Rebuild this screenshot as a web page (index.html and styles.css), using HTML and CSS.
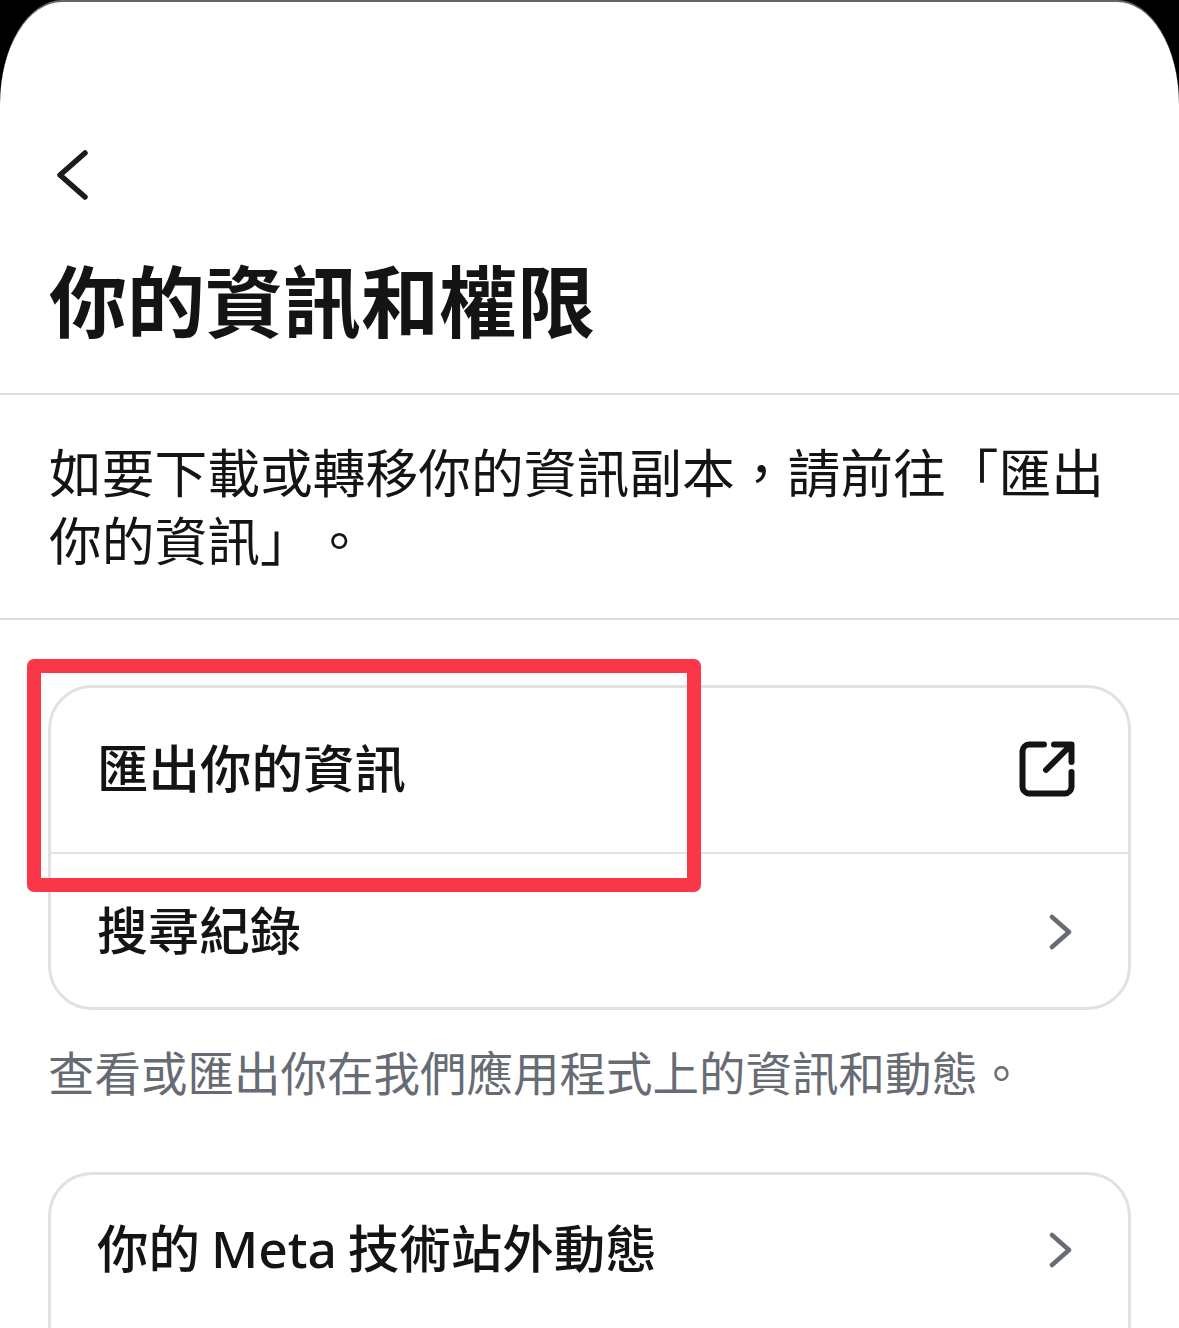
FILE: index.html
```html
<!DOCTYPE html>
<html lang="zh-Hant">
<head>
    <meta charset="UTF-8">
    <meta name="viewport" content="width=device-width, initial-scale=1.0">
    <title>你的資訊和權限</title>
    <link rel="stylesheet" href="styles.css">
</head>
<body>
    <div class="sheet">
        <div class="top-bar">
            <svg class="back-icon" viewBox="0 0 32 50" width="32" height="50">
                <path d="M29 3 L4 25 L29 47" fill="none" stroke="#1c1c1c" stroke-width="5.500" stroke-linecap="round" stroke-linejoin="round"/>
            </svg>
        </div>
        <h1 class="page-title">你的資訊和權限</h1>

        <p class="intro">如要下載或轉移你的資訊副本，請前往「匯出你的資訊」。</p>

        <div class="content">
            <div class="card">
                <div class="row row-first">
                    <span>匯出你的資訊</span>
                    <svg class="external-icon" viewBox="0 0 56 56" width="56" height="56">
                        <path d="M25 3.500 H10 A7 7 0 0 0 3.500 10 V46 A7 7 0 0 0 10 52.500 H46 A7 7 0 0 0 52.500 46 V31" fill="none" stroke="#141414" stroke-width="6" stroke-linecap="round"/>
                        <path d="M35 3.500 H52.500 V21 M52 4 L27 29" fill="none" stroke="#141414" stroke-width="6" stroke-linecap="round" stroke-linejoin="round"/>
                    </svg>
                </div>
                <div class="row row-second">
                    <span>搜尋紀錄</span>
                    <svg class="chevron" viewBox="0 0 24 36" width="24" height="36">
                        <path d="M4 3 L21 18 L4 33" fill="none" stroke="#676b73" stroke-width="4.500" stroke-linecap="round" stroke-linejoin="round"/>
                    </svg>
                </div>
            </div>

            <p class="note">查看或匯出你在我們應用程式上的資訊和動態。</p>

            <div class="card card-cut">
                <div class="row row-meta">
                    <span>你的 Meta 技術站外動態</span>
                    <svg class="chevron" viewBox="0 0 24 36" width="24" height="36">
                        <path d="M4 3 L21 18 L4 33" fill="none" stroke="#676b73" stroke-width="4.500" stroke-linecap="round" stroke-linejoin="round"/>
                    </svg>
                </div>
            </div>
        </div>

        <!-- красная рамка поверх -->
        <div class="highlight"></div>
    </div>
</body>
</html>
```

FILE: styles.css
```css
* {
    box-sizing: border-box;
}

html, body {
    margin: 0;
    height: 1328px;
    overflow: hidden;
    background: #000;
}

body {
    color: #141414;
    font-family: "Noto Sans", "Noto Sans CJK TC", sans-serif;
    text-spacing-trim: space-all;
}

.sheet {
    position: relative;
    height: 1328px;
    background: #fff;
    border-top: 2px solid #666;
    border-radius: 62px 62px 0 0 / 104px 104px 0 0;
    overflow: hidden;
}

.top-bar {
    height: 198px;
    padding: 148px 0 0 56px;
}

.back-icon {
    display: block;
}

.page-title {
    margin: 0;
    padding: 0 49px;
    height: 195px;
    font-size: 78px;
    font-weight: 700;
    line-height: 205px;
    border-bottom: 2px solid #dcdee1;
}

.intro {
    margin: 0;
    padding: 44px 49px 0;
    height: 225px;
    font-size: 52.750px;
    line-height: 68px;
    border-bottom: 2px solid #dcdee1;
}

.content {
    padding: 65px 48px 0;
}

.card {
    border: 3px solid #dfe1e5;
    border-radius: 44px;
}

.card-cut {
    border-bottom: 0;
    border-radius: 44px 44px 0 0;
    height: 170px;
}

.row {
    display: flex;
    justify-content: space-between;
    align-items: center;
    padding: 0 53px 0 46px;
    font-size: 51px;
    font-weight: 500;
}

.row span {
    margin-bottom: 6px;
}

.row-first {
    height: 166px;
    font-size: 51.500px;
    padding-bottom: 2px;
    border-bottom: 2px solid #e3e4e7;
}

.row-first span {
    margin-bottom: 8px;
}

.row-second {
    height: 153px;
}

.row-meta {
    height: 147px;
    font-size: 51.500px;
    word-spacing: -2.500px;
}

.chevron {
    margin: 2px 3px 0 0;
}

.note {
    margin: 0;
    height: 162px;
    padding-top: 33px;
    font-size: 46.500px;
    line-height: 60px;
    color: #676b73;
}

.highlight {
    position: absolute;
    left: 27px;
    top: 657px;
    width: 674px;
    height: 233px;
    border: 14px solid #fa3748;
    border-radius: 7px;
}
```
